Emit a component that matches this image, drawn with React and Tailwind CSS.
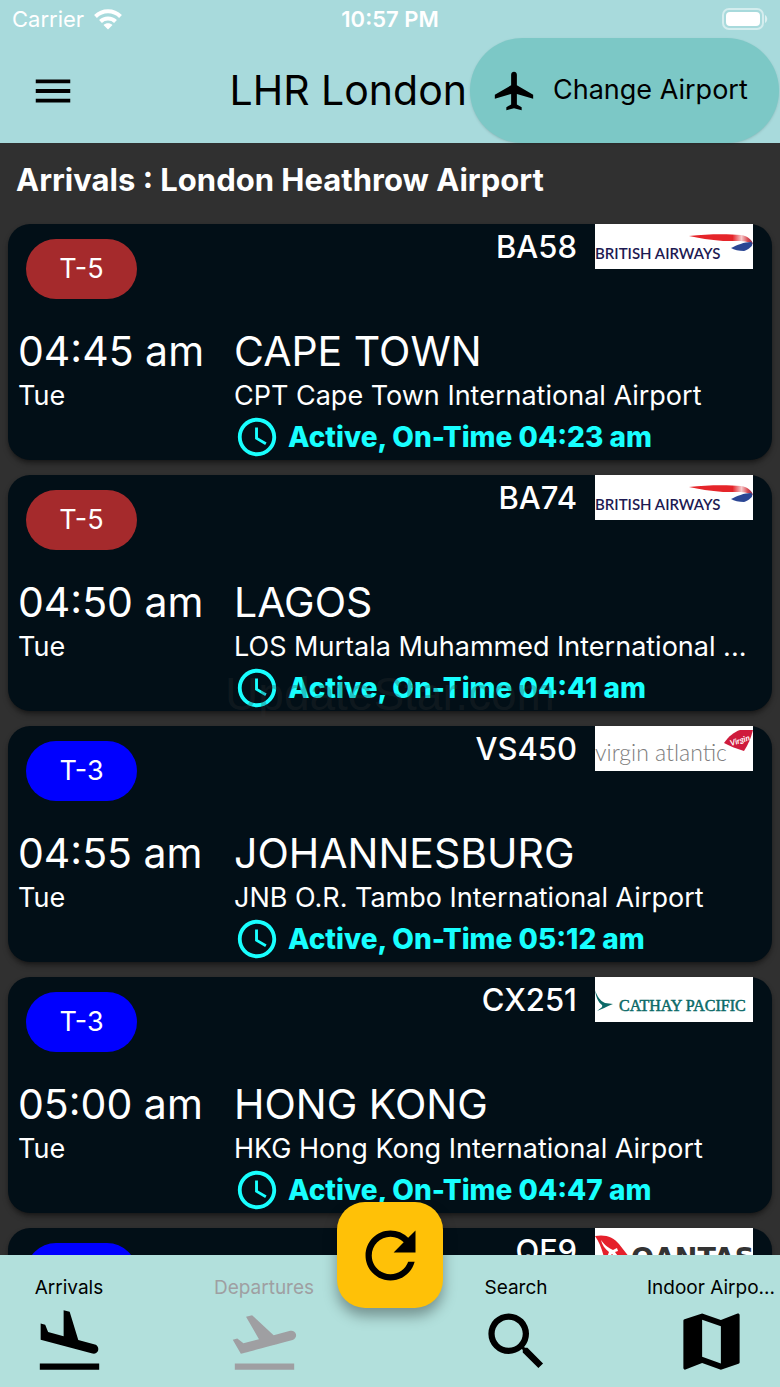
import React, { useState } from 'react';
import {
  MdAccessTime,
  MdAirplanemodeActive,
  MdFlightLand,
  MdFlightTakeoff,
  MdMap,
  MdMenu,
  MdRefresh,
  MdSearch,
} from 'react-icons/md';

const flights = [
  { number: 'BA58', airline: 'ba', terminal: 'T-5', time: '04:45 am', day: 'Tue', city: 'CAPE TOWN', airport: 'CPT Cape Town International Airport', status: 'Active, On-Time 04:23 am' },
  { number: 'BA74', airline: 'ba', terminal: 'T-5', time: '04:50 am', day: 'Tue', city: 'LAGOS', airport: 'LOS Murtala Muhammed International ...', status: 'Active, On-Time 04:41 am' },
  { number: 'VS450', airline: 'vs', terminal: 'T-3', time: '04:55 am', day: 'Tue', city: 'JOHANNESBURG', airport: 'JNB O.R. Tambo International Airport', status: 'Active, On-Time 05:12 am' },
  { number: 'CX251', airline: 'cx', terminal: 'T-3', time: '05:00 am', day: 'Tue', city: 'HONG KONG', airport: 'HKG Hong Kong International Airport', status: 'Active, On-Time 04:47 am' },
  { number: 'QF9', airline: 'qf', terminal: 'T-3' },
];

const terminalColors = {
  'T-5': 'bg-[#a52a2c]',
  'T-3': 'bg-[#0000ff]',
};

function BritishAirways() {
  return (
    <svg viewBox="0 0 158 45" className="block h-full w-full" role="img" aria-label="British Airways">
      <defs>
        <linearGradient id="ribbon" x1="0" x2="1">
          <stop offset="0" stopColor="#e5252a" />
          <stop offset="0.68" stopColor="#e5252a" />
          <stop offset="0.82" stopColor="#f6c9cb" />
          <stop offset="0.92" stopColor="#d8474f" />
          <stop offset="1" stopColor="#7c2b55" />
        </linearGradient>
      </defs>
      <text x="0" y="35" fontFamily="Lato, sans-serif" fontWeight="600" fontSize="15" fill="#1d1a52">BRITISH AIRWAYS</text>
      <path d="M94 12 C112 10 132 10 146 11 C153 12 157 16 158 20 C151 16 141 17 128 17 C115 16 104 14 94 12Z" fill="url(#ribbon)" />
      <path d="M136 24 C142 21 149 18 156 18 C160 21 154 25 149 27 C144 27 139 26 136 24Z" fill="#2b4694" />
    </svg>
  );
}

function VirginAtlantic() {
  return (
    <svg viewBox="0 0 158 45" className="block h-full w-full" role="img" aria-label="Virgin Atlantic">
      <text x="0" y="35" fontFamily="Lato, sans-serif" fontWeight="300" fontSize="23" fill="#7d7d7d">virgin atlantic</text>
      <path d="M129 17 C134 10 139 6 145 4 L158 4 C156 12 153 19 149 25 C142 23 135 20 129 17Z" fill="#cf1b3c" />
      <text x="136" y="20" transform="rotate(-17 136 20)" fontFamily="Lato, sans-serif" fontStyle="italic" fontWeight="700" fontSize="8" fill="#ffffff">Virgin</text>
    </svg>
  );
}

function CathayPacific() {
  return (
    <svg viewBox="0 0 158 45" className="block h-full w-full" role="img" aria-label="Cathay Pacific">
      <path d="M0 13 C2 19 5 24 10 26 L18 27 C11 30 7 32 2 34 C6 31 8 30 7 28 C3 25 1 20 0 13Z" fill="#0b6a68" />
      <text x="24" y="34" fontFamily="'Liberation Serif', serif" fontSize="16" fill="#0b6a68" stroke="#0b6a68" strokeWidth="0.5">CATHAY PACIFIC</text>
    </svg>
  );
}

function Qantas() {
  return (
    <svg viewBox="0 0 158 45" className="block h-full w-full" role="img" aria-label="Qantas">
      <path d="M0 8 C10 6 19 9 24 16 L38 34 L10 34 C8 24 5 15 0 8Z" fill="#e5202b" />
      <path d="M6 12 C10 18 14 20 18 22 L22 20 L23 23 L20 24 C22 28 26 30 32 32 C25 31 20 29 17 26 L11 32 L14 24 C10 21 7 17 6 12Z" fill="#ffffff" />
      <text x="36" y="39" fontFamily="'DejaVu Sans', sans-serif" fontWeight="700" fontSize="27" fill="#333333">QANTAS</text>
    </svg>
  );
}

const logos = {
  ba: BritishAirways,
  vs: VirginAtlantic,
  cx: CathayPacific,
  qf: Qantas,
};

function FlightCard({ flight }) {
  const Logo = logos[flight.airline];
  return (
    <li className="h-[236px] shrink-0 rounded-[22px] bg-[#020f17] pl-[10px] pr-[19px] text-white shadow-md shadow-black/40">
      <div className="flex h-[102px] items-start">
        <span className={`mt-[15px] ml-2 flex h-[60px] w-[111px] items-center justify-center rounded-full text-[27px] ${terminalColors[flight.terminal]}`}>
          {flight.terminal}
        </span>
        <span className="ml-auto mr-[18px] text-[31px] font-medium leading-[46px]">{flight.number}</span>
        <div className="h-[45px] w-[158px] bg-white"><Logo /></div>
      </div>
      {flight.city && (
        <div className="flex">
          <div className="w-[216px] shrink-0">
            <p className="text-[41px] leading-[50px]">{flight.time}</p>
            <p className="text-[27px] leading-10">{flight.day}</p>
          </div>
          <div className="min-w-0 flex-1 whitespace-nowrap">
            <h2 className="text-[41px] leading-[50px]">{flight.city}</h2>
            <p className="text-[27px] leading-10">{flight.airport}</p>
            <p className="flex h-[42px] items-center gap-2 text-[28px] font-extrabold text-[#18ffff]">
              <MdAccessTime size={46} className="shrink-0" />
              {flight.status}
            </p>
          </div>
        </div>
      )}
    </li>
  );
}

function NavItem({ icon: Icon, label, muted, onClick }) {
  return (
    <button
      onClick={onClick}
      className={`flex w-[138px] flex-col items-center ${muted ? 'text-[#9f9fa2]' : 'text-black'}`}
    >
      <span className="whitespace-nowrap text-[19px] leading-6">{label}</span>
      <Icon size={75} className="mt-1" />
    </button>
  );
}

export default function App() {
  const [tab, setTab] = useState('arrivals');

  return (
    <div className="relative flex h-screen flex-col bg-[#303030] font-['Inter',sans-serif]">
      <header className="shrink-0 bg-[#a8dadc]">
        <div className="grid h-[38px] grid-cols-3 items-center px-3 text-[22px] text-white">
          <div className="flex items-center gap-[10px]">
            Carrier
            <svg viewBox="0 0 28 21" className="h-[21px] w-7" fill="none" stroke="currentColor" strokeWidth="4">
              <path d="M1.5 7.5 C8.500 .6 19.500 .6 26.500 7.500" />
              <path d="M6.500 12.500 C10.500 8.500 17.500 8.500 21.500 12.500" />
              <path d="M9.500 16 C12 13.700 16 13.700 18.500 16 L14 20.500Z" fill="currentColor" stroke="none" />
            </svg>
          </div>
          <span className="text-center font-semibold">10:57 PM</span>
          <svg viewBox="0 0 46 22" className="h-[22px] w-[46px] justify-self-end">
            <rect x="1" y="1" width="40" height="20" rx="6" fill="none" stroke="#ffffff" strokeOpacity="0.5" strokeWidth="2" />
            <rect x="4" y="4" width="34" height="14" rx="4" fill="#ffffff" />
            <path d="M43 7 C46 9 46 13 43 15Z" fill="#ffffff" fillOpacity="0.6" />
          </svg>
        </div>
        <div className="flex h-[105px] items-center">
          <button aria-label="Menu" className="ml-[30px]"><MdMenu size={46} /></button>
          <h1 className="ml-auto whitespace-nowrap text-[41px]">LHR London</h1>
          <button className="ml-[3px] mr-px flex h-full w-[309px] items-center gap-4 whitespace-nowrap rounded-full bg-[#7cc8c6] pl-[21px] text-[27px] shadow-sm">
            <MdAirplanemodeActive size={46} className="shrink-0" />
            Change Airport
          </button>
        </div>
      </header>

      <main className="flex min-h-0 flex-1 flex-col overflow-hidden">
        <p className="px-4 pt-[17px] pb-6 text-[31px] font-bold leading-10 text-white">Arrivals : London Heathrow Airport</p>
        <ul className="flex min-h-0 flex-1 flex-col gap-[15px] px-2">
          {flights.map((f) => (
            <FlightCard key={f.number} flight={f} />
          ))}
        </ul>
      </main>

      <nav className="relative flex h-[132px] shrink-0 justify-between bg-[#b2e0dc] pt-[21px]">
        <div className="flex w-[333px] justify-between">
          <NavItem icon={MdFlightLand} label="Arrivals" muted={tab !== 'arrivals'} onClick={() => setTab('arrivals')} />
          <NavItem icon={MdFlightTakeoff} label="Departures" muted={tab !== 'departures'} onClick={() => setTab('departures')} />
        </div>
        <div className="flex w-[333px] justify-between">
          <NavItem icon={MdSearch} label="Search" />
          <NavItem icon={MdMap} label="Indoor Airpo..." />
        </div>
        <button
          aria-label="Refresh"
          className="absolute left-1/2 -top-[53px] flex size-[106px] -translate-x-1/2 items-center justify-center rounded-[28px] bg-[#ffc107] shadow-[0_8px_14px_rgba(0,0,0,0.35)]"
        >
          <MdRefresh size={75} />
        </button>
      </nav>

      <span className="pointer-events-none absolute left-1/2 top-1/2 -translate-x-1/2 -translate-y-1/2 font-['Liberation_Sans',sans-serif] text-[46px] text-[#303030]/30">
        UpdateStar.com
      </span>
    </div>
  );
}
